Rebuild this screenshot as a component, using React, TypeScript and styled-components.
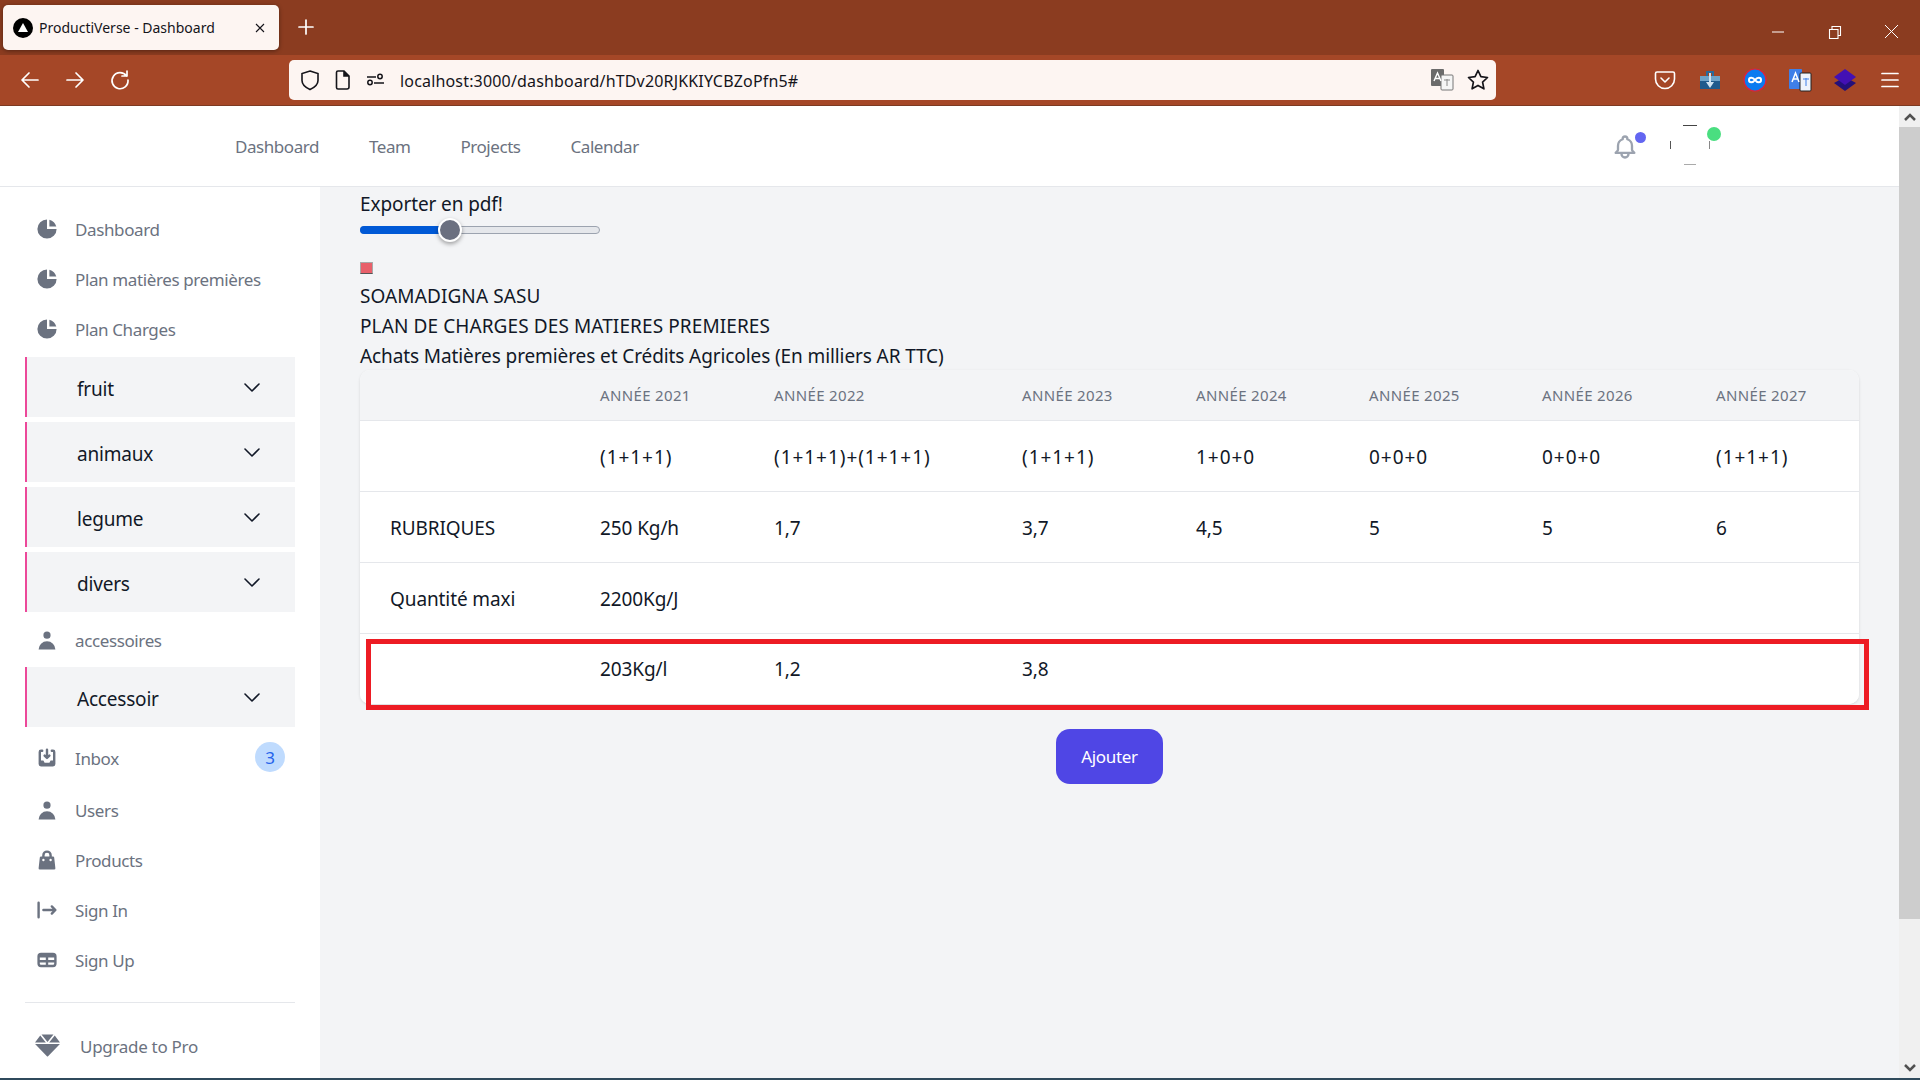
import React from "react";
import styled, { createGlobalStyle } from "styled-components";

const Global = createGlobalStyle`
  html, body { margin: 0; padding: 0; width: 1920px; height: 1080px; overflow: hidden; }
  body { font-family: "Noto Sans", "Open Sans", sans-serif; background: #f3f4f6; }
  * { box-sizing: border-box; }
`;

const Shell = styled.div`
  width: 1920px; height: 1080px; display: flex; flex-direction: column; overflow: hidden;
`;
const TabBar = styled.div`
  height: 55px; background: #8b3c20; display: flex; align-items: flex-start; padding: 5px 0 0 3px; flex: none;
`;
const Tab = styled.div`
  width: 276px; height: 45px; background: #fdf5f2; border-radius: 5px; display: flex; align-items: center;
  padding: 0 13px 0 10px; box-shadow: 0 1px 4px rgba(0,0,0,.4); color: #15141a; font-size: 14px; letter-spacing: 0;
`;
const TabTitle = styled.span` flex: 1; margin-left: 6px; white-space: nowrap; `;
const NewTab = styled.div` width: 24px; height: 24px; margin: 10px 0 0 15px; color: #fff; `;
const WindowControls = styled.div`
  margin-left: auto; display: flex; gap: 41px; padding: 15px 20px 0 0; color: #fff;
`;
const Toolbar = styled.div`
  height: 51px; background: #a54727; border-bottom: 1px solid #7d3a22; display: flex; align-items: center; flex: none;
`;
const NavButtons = styled.div`
  width: 289px; display: flex; gap: 21px; padding-left: 18px; color: #fff;
`;
const UrlBar = styled.div`
  width: 1207px; height: 40px; background: #fdf5f2; border-radius: 5px; display: flex; align-items: center; color: #15141a;
  padding: 0 6px 0 10px;
`;
const UrlIcons = styled.div` display: flex; gap: 12px; align-items: center; `;
const UrlText = styled.span`
  flex: 1; margin-left: 13px; padding-top: 2px; font-size: 16px; letter-spacing: .17px; white-space: nowrap; color: #15141a;
`;
const Extensions = styled.div`
  display: flex; align-items: center; gap: 21px; margin-left: 157px; color: #fff;
`;

const Page = styled.div` flex: 1; display: flex; min-height: 0; border-bottom: 2px solid #2f4a5c; `;
const Viewport = styled.div` flex: 1; display: flex; flex-direction: column; min-width: 0; `;
const Scrollbar = styled.div`
  width: 21px; background: #f0f0f0; display: flex; flex-direction: column; color: #505050;
`;
const ScrollButton = styled.div` height: 21px; display: flex; align-items: center; justify-content: center; flex: none; `;
const ScrollThumb = styled.div` height: 792px; background: #cdcdcd; flex: none; `;
const ScrollSpace = styled.div` flex: 1; `;

const TopNav = styled.header`
  height: 81px; background: #fff; border-bottom: 1px solid #e5e7eb; display: flex; align-items: center; padding: 1px 0 0 235px; flex: none;
`;
const TopLinks = styled.nav` display: flex; gap: 50px; `;
const TopLink = styled.a` font-size: 17px; color: #6b7280; letter-spacing: -.45px; `;
const TopRight = styled.div` margin-left: auto; display: flex; align-items: center; margin-right: 189px; `;
const BellWrap = styled.div` position: relative; width: 28px; height: 28px; color: #9ca3af; margin-right: 31px; `;
const BellDot = styled.span`
  position: absolute; width: 11px; height: 11px; border-radius: 50%; background: #6366f1; top: -1px; right: -7px;
`;
const AvatarWrap = styled.div` position: relative; width: 40px; height: 40px; margin-bottom: 3px; `;
const AvatarDot = styled.span`
  position: absolute; width: 14px; height: 14px; border-radius: 50%; background: #4ade80; top: 2px; right: -11px;
`;

const Body = styled.div` flex: 1; display: flex; min-height: 0; `;
const Sidebar = styled.aside`
  width: 320px; flex: none; background: #fff; padding: 17px 25px 0; display: flex; flex-direction: column;
`;
const NavItem = styled.a<{ $top?: number }>`
  height: 50px; flex: none; display: flex; align-items: center; gap: 16px; padding: 1px 10px 0; font-size: 17px; color: #6b7280;
  letter-spacing: -.38px; margin-top: ${p => p.$top ?? 0}px;
  svg { flex: none; width: 24px; height: 24px; fill: #6b7280; margin-top: -1px; }
`;
const NavLabel = styled.span` flex: 1; white-space: nowrap; `;
const Badge = styled.span`
  width: 30px; height: 30px; border-radius: 50%; background: #bfdbfe; color: #2563eb; display: flex; align-items: center; justify-content: center; font-size: 17px; margin-top: -3px;
`;
const Accordion = styled.div<{ $top: number }>`
  height: 60px; flex: none; background: #f3f4f6; border-left: 2px solid #ec4899; display: flex; align-items: center; justify-content: space-between;
  padding: 3px 31px 0 50px; font-size: 19px; color: #111827; letter-spacing: -.2px; margin-top: ${p => p.$top}px;
  svg { width: 24px; height: 24px; margin-top: -4px; }
`;
const Divider = styled.hr` height: 1px; margin: 17px 0 18px; border: none; background: #e5e7eb; flex: none; `;
const UpgradeItem = styled.a`
  height: 50px; display: flex; align-items: center; gap: 20px; padding: 0 10px; font-size: 17px; color: #6b7280; letter-spacing: -.3px;
  svg { width: 25px; height: 25px; fill: #6b7280; margin-top: -1px; }
`;

const Main = styled.main` flex: 1; padding: 2px 40px 0; background: #f3f4f6; min-width: 0; `;
const Heading = styled.div<{ $caps?: boolean }>`
  font-size: 19px; line-height: 30px; color: #111827; letter-spacing: ${p => (p.$caps ? ".1px" : "-.1px")}; white-space: nowrap;
`;
const SliderTrack = styled.div`
  position: relative; width: 240px; height: 8px; margin-top: 7px; background: #e5e7eb; border: 1px solid #9ca3af; border-radius: 4px;
`;
const SliderFill = styled.div`
  position: absolute; left: -1px; top: -1px; bottom: -1px; background: #0059d6; border-radius: 4px 0 0 4px;
`;
const SliderThumb = styled.div`
  position: absolute; top: -9px; width: 24px; height: 24px; border-radius: 50%; background: #6b7080; border: 2px solid #fff;
  box-shadow: 0 2px 4px rgba(0,0,0,.35); transform: translateX(-12px);
`;
const BrokenImage = styled.div`
  width: 13px; height: 12px; margin: 28px 0 7px; background: #e8606a; border: 1px solid #a8a8a8; border-bottom-color: #555;
`;
const TableWrap = styled.div` position: relative; margin-top: -1px; `;
const Table = styled.div`
  border-radius: 10px; overflow: hidden; box-shadow: 0 1px 3px rgba(0,0,0,.12); background: #fff;
`;
const Row = styled.div<{ $head?: boolean }>`
  display: grid; grid-template-columns: 240px 174px 248px 174px 173px 173px 174px 1fr;
  height: ${p => (p.$head ? 51 : 71)}px; align-items: center; background: ${p => (p.$head ? "#f3f4f6" : "#fff")};
  border-bottom: 1px solid #e5e7eb; color: #111827; font-size: 19px; letter-spacing: -.1px;
  &:last-child { border-bottom: none; height: 70px; padding-bottom: 2px; }
`;
const HeadCell = styled.div` font-size: 15px; color: #6b7280; text-transform: uppercase; letter-spacing: .35px; white-space: nowrap; `;
const Cell = styled.div<{ $first?: boolean; $formula?: boolean }>`
  padding: 2px 0 0 ${p => (p.$first ? 30 : 0)}px; white-space: nowrap;
  letter-spacing: ${p => (p.$formula ? ".95px" : "inherit")};
`;
const Highlight = styled.div`
  position: absolute; left: 6px; right: -10px; top: 269px; height: 71px; border: 5px solid #ed1c24; pointer-events: none;
`;
const Actions = styled.div` display: flex; justify-content: center; margin-top: 25px; `;
const AddButton = styled.button`
  width: 107px; height: 55px; background: #4f46e5; border: none; border-radius: 14px; color: #fff; font: inherit; font-size: 17px; letter-spacing: -.3px;
`;

const Pie = () => (
  <svg viewBox="0 0 20 20"><path d="M2 10a8 8 0 018-8v8h8a8 8 0 11-16 0z" /><path d="M12 2.252A8.014 8.014 0 0117.748 8H12V2.252z" /></svg>
);
const UserIcon = () => (
  <svg viewBox="0 0 20 20"><path fillRule="evenodd" d="M10 9a3 3 0 100-6 3 3 0 000 6zm-7 9a7 7 0 1114 0H3z" clipRule="evenodd" /></svg>
);
const Chevron = () => (
  <svg viewBox="0 0 24 24" fill="none" stroke="#111827" strokeWidth="1.6" strokeLinecap="round" strokeLinejoin="round"><path d="M5 9l7 7 7-7" /></svg>
);

const Line = ({ d, size = 22 }: { d: string; size?: number }) => (
  <svg width={size} height={size} viewBox="0 0 24 24" fill="none" stroke="currentColor" strokeWidth="1.7" strokeLinecap="round" strokeLinejoin="round"><path d={d} /></svg>
);

const accordions = ["fruit", "animaux", "legume", "divers"];
const headers = ["Année 2021", "Année 2022", "Année 2023", "Année 2024", "Année 2025", "Année 2026", "Année 2027"];
const rows = [
  ["", "(1+1+1)", "(1+1+1)+(1+1+1)", "(1+1+1)", "1+0+0", "0+0+0", "0+0+0", "(1+1+1)"],
  ["RUBRIQUES", "250 Kg/h", "1,7", "3,7", "4,5", "5", "5", "6"],
  ["Quantité maxi", "2200Kg/J", "", "", "", "", "", ""],
  ["", "203Kg/l", "1,2", "3,8", "", "", "", ""],
];

export default function App() {
  return (
    <Shell>
      <Global />
      <TabBar>
        <Tab>
          <svg width="20" height="20" viewBox="0 0 20 20"><circle cx="10" cy="10" r="10" fill="#000" /><path d="M10 5l5 9H5z" fill="#fff" /></svg>
          <TabTitle>ProductiVerse - Dashboard</TabTitle>
          <svg width="12" height="12" viewBox="0 0 12 12" stroke="#15141a" strokeWidth="1.1"><path d="M2 2l8 8M10 2l-8 8" /></svg>
        </Tab>
        <NewTab><Line d="M12 5v14M5 12h14" size={24} /></NewTab>
        <WindowControls>
          <svg width="16" height="24" viewBox="0 0 16 24" stroke="#fff" strokeWidth="1"><path d="M2 12h12" /></svg>
          <svg width="16" height="24" viewBox="0 0 16 24" fill="none" stroke="#fff" strokeWidth="1.1"><path d="M2.5 9.5h8.5v9H2.5zM5 9.500V6.500h8.500v9H11" /></svg>
          <svg width="16" height="24" viewBox="0 0 16 24" stroke="#fff" strokeWidth="1"><path d="M1 5l13 13M14 5L1 18" /></svg>
        </WindowControls>
      </TabBar>
      <Toolbar>
        <NavButtons>
          <Line d="M20 12H5M11 5l-7 7 7 7" size={24} />
          <Line d="M4 12h15M13 5l7 7-7 7" size={24} />
          <Line d="M18.500 8A8 8 0 1 0 20 12M19 3v5h-5" size={24} />
        </NavButtons>
        <UrlBar>
          <UrlIcons>
            <svg width="22" height="24" viewBox="0 0 22 24" fill="none" stroke="#15141a" strokeWidth="1.6"><path d="M11 3l8 2.500v7c0 4-3.500 7-8 9-4.500-2-8-5-8-9v-7z" /></svg>
            <svg width="20" height="24" viewBox="0 0 20 24" fill="none" stroke="#15141a" strokeWidth="1.6"><path d="M5 3h6l5 5v11a2 2 0 0 1-2 2H5a1.500 1.500 0 0 1-1.500-1.500v-15A1.500 1.500 0 0 1 5 3z" /><path d="M11 3v5h5" fill="#15141a" /></svg>
            <svg width="22" height="24" viewBox="0 0 22 24" fill="none" stroke="#15141a" strokeWidth="1.5"><circle cx="15" cy="8.500" r="2.200" /><circle cx="5" cy="14.500" r="2.200" /><path d="M2 9h9M9 15h10" /></svg>
          </UrlIcons>
          <UrlText>localhost:3000/dashboard/hTDv20RJKKIYCBZoPfn5#</UrlText>
          <UrlIcons>
            <svg width="24" height="24" viewBox="0 0 24 24"><rect x="1" y="1" width="13" height="17" rx="1" fill="#6b6b6b" /><rect x="11" y="7" width="12" height="15" rx="1" fill="#f5f5f5" stroke="#777" /><path d="M4 13l3.500-8 3.500 8M5.500 10.500h4" fill="none" stroke="#fff" strokeWidth="1.400" /><path d="M14 12h6M17 11v7" stroke="#888" /></svg>
            <svg width="24" height="24" viewBox="0 0 24 24" fill="none" stroke="#15141a" strokeWidth="1.700" strokeLinejoin="round"><path d="M12 2.500l2.900 6.200 6.600.8-4.900 4.600 1.300 6.700-5.900-3.400-5.900 3.400 1.300-6.700L2.500 9.500l6.600-.8z" /></svg>
          </UrlIcons>
        </UrlBar>
        <Extensions>
          <svg width="24" height="24" viewBox="0 0 24 24" fill="none" stroke="#fff" strokeWidth="1.600" strokeLinecap="round" strokeLinejoin="round"><path d="M4 4h16a1.500 1.500 0 0 1 1.500 1.500V11a9.500 9.500 0 0 1-19 0V5.500A1.500 1.500 0 0 1 4 4z" /><path d="M8 10l4 4 4-4" /></svg>
          <svg width="24" height="24" viewBox="0 0 24 24"><path d="M2 8h20v13H2z" fill="#1f5a8c" /><path d="M2 8h20v5H2z" fill="#6fa3c8" /><path d="M9 8V4h6v4" fill="none" stroke="#2a6a9c" strokeWidth="2" /><path d="M11 5h2v9h3l-4 6-4-6h3z" fill="#cfe3f2" /></svg>
          <svg width="24" height="24" viewBox="0 0 24 24"><circle cx="12" cy="12" r="11" fill="#0a7bf0" stroke="#e0203a" strokeWidth="1.200" /><path d="M12 12c-2-3-6-3-6 0s4 3 6 0 6-3 6 0-4 3-6 0z" fill="none" stroke="#fff" strokeWidth="2" /></svg>
          <svg width="24" height="24" viewBox="0 0 24 24"><rect x="1" y="1" width="13" height="20" rx="1" fill="#3f7fe8" /><rect x="12" y="5" width="11" height="18" rx="1" fill="#eef3fb" stroke="#222" /><path d="M4 14l3.500-9 3.500 9M5.500 11h4" fill="none" stroke="#fff" strokeWidth="1.500" /><path d="M15 11h6M18 10v8" stroke="#3f7fe8" /></svg>
          <svg width="24" height="24" viewBox="0 0 24 24"><path d="M12 9l11 6-11 8L1 15z" fill="#23107a" /><path d="M12 1l11 8-11 8L1 9z" fill="#4310b4" /></svg>
          <svg width="24" height="24" viewBox="0 0 24 24" stroke="#fff" strokeWidth="1.700" strokeLinecap="round"><path d="M4 5.500h16M4 12h16M4 18.500h16" /></svg>
        </Extensions>
      </Toolbar>
      <Page>
        <Viewport>
          <TopNav>
            <TopLinks>
              <TopLink>Dashboard</TopLink>
              <TopLink>Team</TopLink>
              <TopLink>Projects</TopLink>
              <TopLink>Calendar</TopLink>
            </TopLinks>
            <TopRight>
              <BellWrap>
                <svg width="28" height="28" viewBox="0 0 24 24" fill="none" stroke="currentColor" strokeWidth="2" strokeLinecap="round" strokeLinejoin="round"><path d="M15 17h5l-1.405-1.405A2.032 2.032 0 0118 14.158V11a6.002 6.002 0 00-4-5.659V5a2 2 0 10-4 0v.341C7.670 6.165 6 8.388 6 11v3.159c0 .538-.214 1.055-.595 1.436L4 17h5m6 0v1a3 3 0 11-6 0v-1m6 0H9" /></svg>
                <BellDot />
              </BellWrap>
              <AvatarWrap>
                <svg width="40" height="40" viewBox="0 0 40 40" fill="none" strokeWidth="1">
                  <path d="M13 .5h14" stroke="#444" />
                  <path d="M14 39.500h12" stroke="#aaa" />
                  <path d="M.5 16v8" stroke="#555" />
                  <path d="M39.500 16v8" stroke="#888" />
                </svg>
                <AvatarDot />
              </AvatarWrap>
            </TopRight>
          </TopNav>
          <Body>
            <Sidebar>
              <NavItem><Pie /><NavLabel>Dashboard</NavLabel></NavItem>
              <NavItem><Pie /><NavLabel>Plan matières premières</NavLabel></NavItem>
              <NavItem><Pie /><NavLabel>Plan Charges</NavLabel></NavItem>
              {accordions.map((a, i) => (
                <Accordion key={a} $top={i === 0 ? 3 : 5}>{a}<Chevron /></Accordion>
              ))}
              <NavItem $top={3}><UserIcon /><NavLabel>accessoires</NavLabel></NavItem>
              <Accordion $top={2}>Accessoir<Chevron /></Accordion>
              <NavItem $top={6}>
                <svg viewBox="0 0 20 20"><path d="M8.707 7.293a1 1 0 00-1.414 1.414l2 2a1 1 0 001.414 0l2-2a1 1 0 00-1.414-1.414L11 7.586V3a1 1 0 10-2 0v4.586l-.293-.293z" /><path d="M3 5a2 2 0 012-2h1a1 1 0 010 2H5v7h2l1 2h4l1-2h2V5h-1a1 1 0 110-2h1a2 2 0 012 2v10a2 2 0 01-2 2H5a2 2 0 01-2-2V5z" /></svg>
                <NavLabel>Inbox</NavLabel>
                <Badge>3</Badge>
              </NavItem>
              <NavItem $top={2}><UserIcon /><NavLabel>Users</NavLabel></NavItem>
              <NavItem>
                <svg viewBox="0 0 20 20"><path fillRule="evenodd" clipRule="evenodd" d="M10 2a4 4 0 00-4 4v1H5a1 1 0 00-.994.89l-1 9A1 1 0 004 18h12a1 1 0 00.994-1.110l-1-9A1 1 0 0015 7h-1V6a4 4 0 00-4-4zm2 5V6a2 2 0 10-4 0v1h4zm-6 3a1 1 0 112 0 1 1 0 01-2 0zm7-1a1 1 0 100 2 1 1 0 000-2z" /></svg>
                <NavLabel>Products</NavLabel>
              </NavItem>
              <NavItem>
                <svg viewBox="0 0 20 20"><path fillRule="evenodd" clipRule="evenodd" d="M3 3a1 1 0 011 1v12a1 1 0 11-2 0V4a1 1 0 011-1zm10.293 3.293a1 1 0 011.414 0l3 3a1 1 0 010 1.414l-3 3a1 1 0 01-1.414-1.414L14.586 11H7a1 1 0 110-2h7.586l-1.293-1.293a1 1 0 010-1.414z" /></svg>
                <NavLabel>Sign In</NavLabel>
              </NavItem>
              <NavItem>
                <svg viewBox="0 0 20 20"><path fillRule="evenodd" clipRule="evenodd" d="M5 4a3 3 0 00-3 3v6a3 3 0 003 3h10a3 3 0 003-3V7a3 3 0 00-3-3H5zm-1 9v-1h5v2H5a1 1 0 01-1-1zm7 1h4a1 1 0 001-1v-1h-5v2zm0-4h5V8h-5v2zM9 8H4v2h5V8z" /></svg>
                <NavLabel>Sign Up</NavLabel>
              </NavItem>
              <Divider />
              <UpgradeItem>
                <svg viewBox="0 0 512 512"><path d="M378.700 32H133.300L256 182.700 378.700 32zM512 192L404.600 50.700 289.600 192H512zM107.400 50.670L0 192h222.400L107.400 50.670zM244.300 474.900c3 3.300 7.300 5.100 11.700 5.100s8.653-1.828 11.670-5.062L510.600 224H1.365L244.300 474.900z" /></svg>
                <NavLabel>Upgrade to Pro</NavLabel>
              </UpgradeItem>
            </Sidebar>
            <Main>
              <Heading>Exporter en pdf!</Heading>
              <SliderTrack>
                <SliderFill style={{ width: "38%" }} />
                <SliderThumb style={{ left: "37.500%" }} />
              </SliderTrack>
              <BrokenImage />
              <Heading $caps>SOAMADIGNA SASU</Heading>
              <Heading $caps>PLAN DE CHARGES DES MATIERES PREMIERES</Heading>
              <Heading>Achats Matières premières et Crédits Agricoles (En milliers AR TTC)</Heading>
              <TableWrap>
                <Table>
                  <Row $head>
                    <div />
                    {headers.map(h => <HeadCell key={h}>{h}</HeadCell>)}
                  </Row>
                  {rows.map((r, i) => (
                    <Row key={i}>
                      {r.map((c, j) => <Cell key={j} $first={j === 0} $formula={i === 0}>{c}</Cell>)}
                    </Row>
                  ))}
                </Table>
                <Highlight />
              </TableWrap>
              <Actions><AddButton>Ajouter</AddButton></Actions>
            </Main>
          </Body>
        </Viewport>
        <Scrollbar>
          <ScrollButton><svg width="14" height="10" viewBox="0 0 14 10" fill="none" stroke="currentColor" strokeWidth="2.500"><path d="M2 8l5-5 5 5" /></svg></ScrollButton>
          <ScrollThumb />
          <ScrollSpace />
          <ScrollButton><svg width="14" height="10" viewBox="0 0 14 10" fill="none" stroke="currentColor" strokeWidth="2.500"><path d="M2 2l5 5 5-5" /></svg></ScrollButton>
        </Scrollbar>
      </Page>
    </Shell>
  );
}
